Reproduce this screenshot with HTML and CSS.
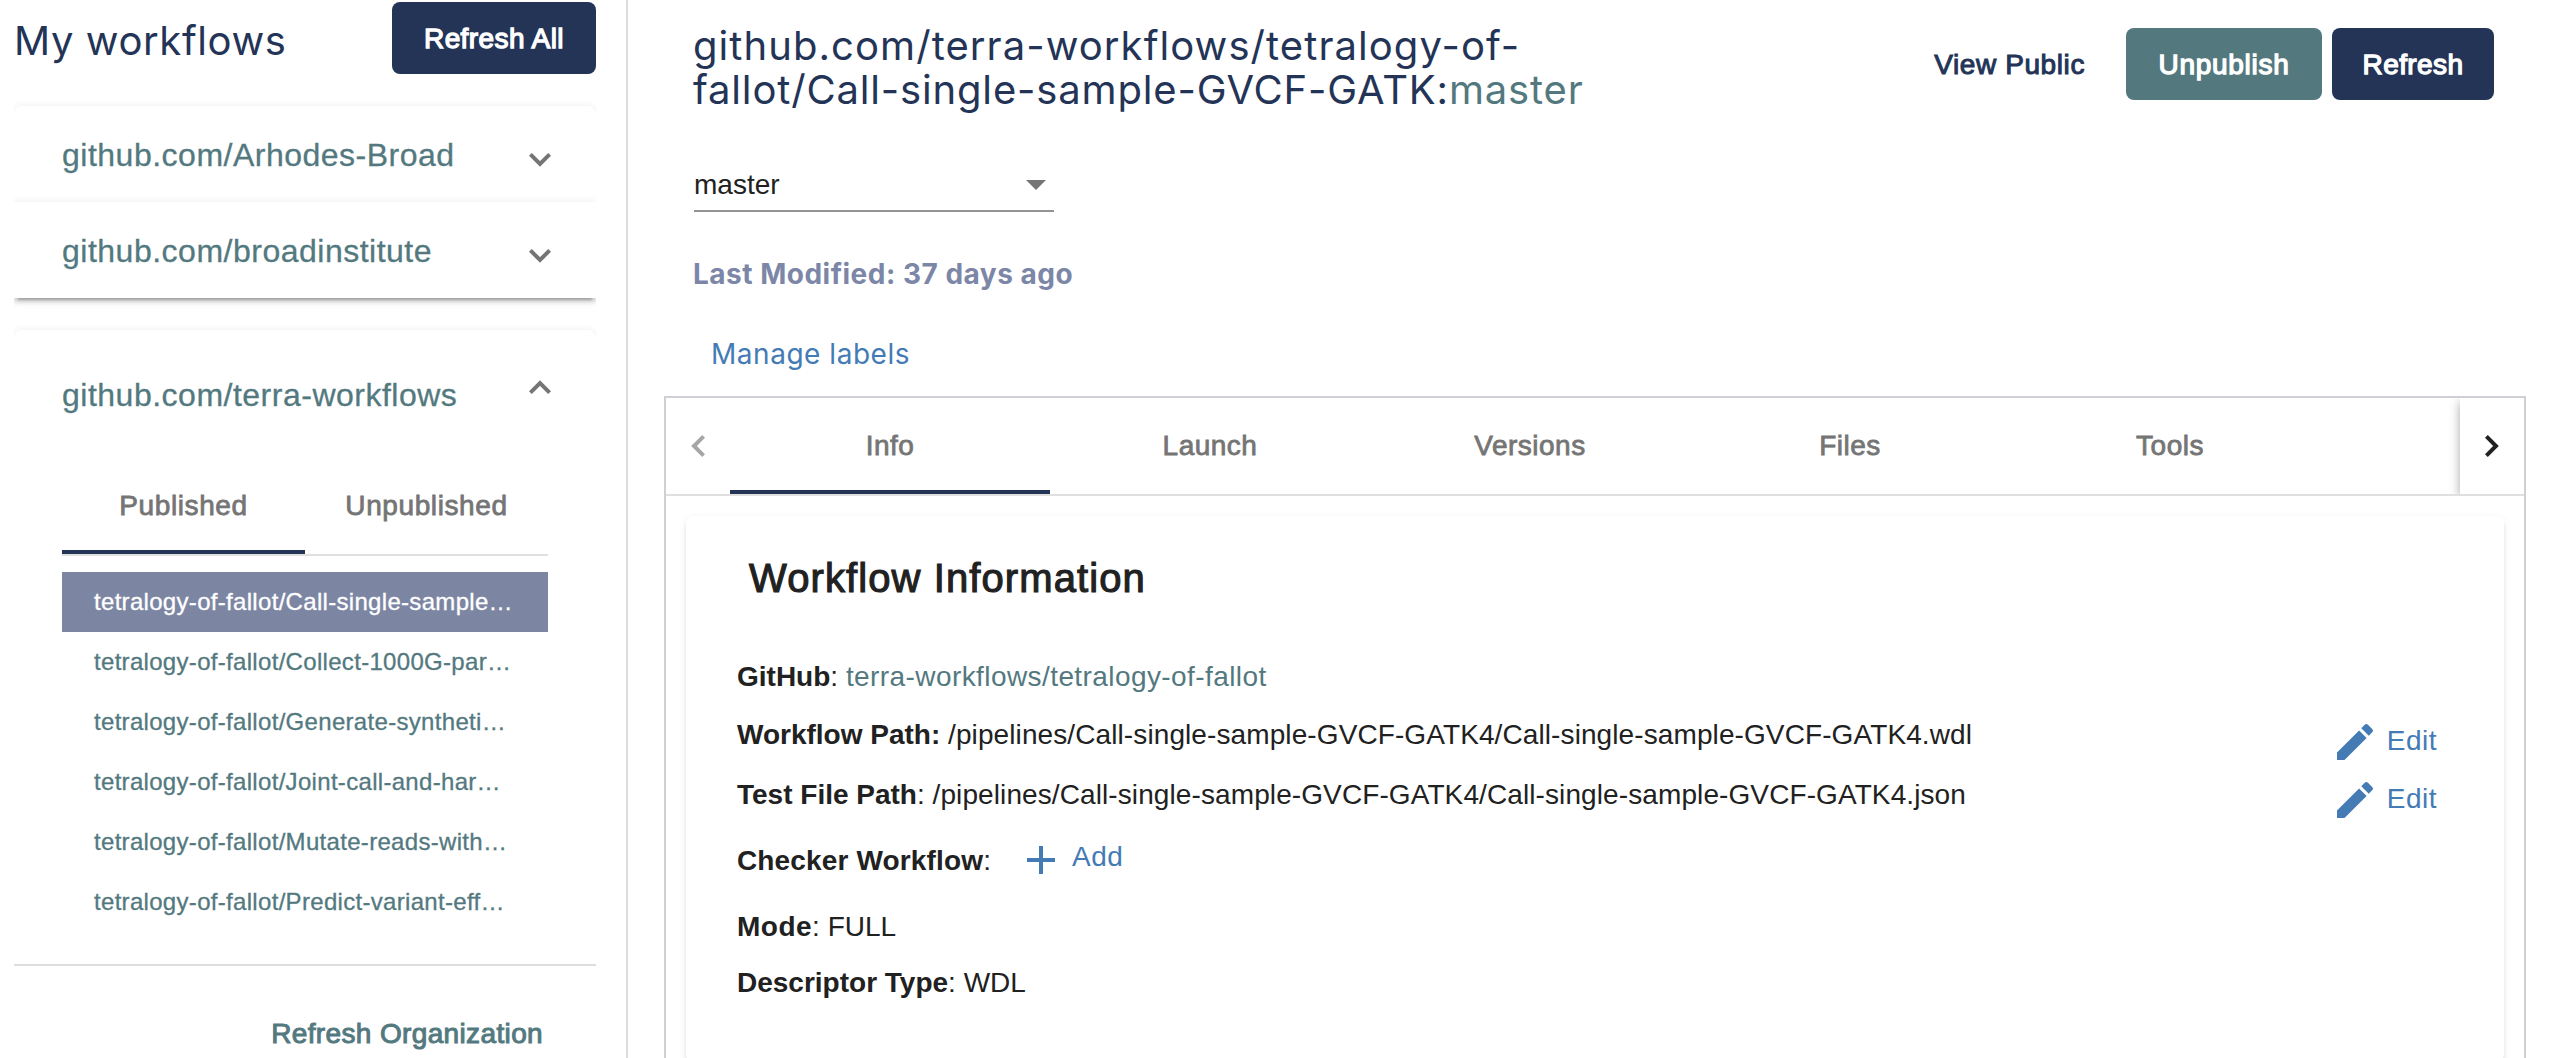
FILE: index.html
```html
<!DOCTYPE html>
<html lang="en">
<head>
<meta charset="utf-8">
<title>My workflows</title>
<link rel="stylesheet" href="styles.css">
</head>
<body>
<aside class="sidebar">
  <header class="sidebar-head">
    <h1 class="sidebar-title">My workflows</h1>
    <button class="btn btn-navy btn-all">Refresh All</button>
  </header>
  <div class="orgs">
    <section class="org org-first">
      <span class="org-name">github.com/Arhodes-Broad</span>
      <svg class="chev" viewBox="0 0 22 14"><path d="M1.4 1.4 11 11 20.6 1.4"/></svg>
    </section>
    <section class="org org-last">
      <span class="org-name">github.com/broadinstitute</span>
      <svg class="chev" viewBox="0 0 22 14"><path d="M1.4 1.4 11 11 20.6 1.4"/></svg>
    </section>
    <section class="org-open">
      <div class="org-open-head">
        <span class="org-name">github.com/terra-workflows</span>
        <svg class="chev chev-up" viewBox="0 0 22 14"><path d="M1.4 12.6 11 3 20.6 12.6"/></svg>
      </div>
      <nav class="mini-tabs">
        <a class="mini-tab active">Published</a>
        <a class="mini-tab">Unpublished</a>
      </nav>
      <ul class="entries">
        <li class="entry selected">tetralogy-of-fallot/Call-single-sample…</li>
        <li class="entry">tetralogy-of-fallot/Collect-1000G-par…</li>
        <li class="entry">tetralogy-of-fallot/Generate-syntheti…</li>
        <li class="entry">tetralogy-of-fallot/Joint-call-and-har…</li>
        <li class="entry">tetralogy-of-fallot/Mutate-reads-with…</li>
        <li class="entry">tetralogy-of-fallot/Predict-variant-eff…</li>
      </ul>
      <footer class="org-foot">Refresh Organization</footer>
    </section>
  </div>
</aside>
<main class="main">
  <header class="main-head">
    <h2 class="wf-title"><span class="line-one">github.com/terra-workflows/tetralogy-of-</span><br>fallot/Call-single-sample-GVCF-GATK:<em class="wf-version">master</em></h2>
    <div class="actions">
      <a class="view-public">View Public</a>
      <button class="btn btn-teal">Unpublish</button>
      <button class="btn btn-navy btn-refresh">Refresh</button>
    </div>
  </header>
  <div class="select"><span>master</span><svg class="caret" viewBox="0 0 20 10"><path d="M0 0h20L10 10z"/></svg></div>
  <p class="modified">Last Modified: 37 days ago</p>
  <a class="manage">Manage labels</a>
  <section class="panel">
    <nav class="tabs">
      <span class="pager"><svg class="arrow arrow-off" viewBox="0 0 14 22"><path d="M12.6 1.4 3 11l9.6 9.6"/></svg></span>
      <div class="tab-list">
        <a class="tab active">Info</a>
        <a class="tab">Launch</a>
        <a class="tab">Versions</a>
        <a class="tab">Files</a>
        <a class="tab">Tools</a>
      </div>
      <span class="pager pager-next"><svg class="arrow" viewBox="0 0 14 22"><path d="M1.4 1.4 11 11l-9.6 9.6"/></svg></span>
    </nav>
    <article class="card">
      <h3 class="card-title">Workflow Information</h3>
      <div class="row r-github"><b>GitHub</b>:&nbsp;<a class="repo">terra-workflows/tetralogy-of-fallot</a></div>
      <div class="row r-path"><b>Workflow Path:</b>&nbsp;<span class="path">/pipelines/Call-single-sample-GVCF-GATK4/Call-single-sample-GVCF-GATK4.wdl</span>
        <a class="edit"><svg class="icon" viewBox="0 0 24 24"><path d="M3 17.25V21h3.75L17.81 9.94l-3.75-3.75L3 17.25zM20.71 7.04a1 1 0 0 0 0-1.41l-2.34-2.34a1 1 0 0 0-1.41 0l-1.83 1.83 3.75 3.75 1.83-1.83z"/></svg><span>Edit</span></a></div>
      <div class="row r-test"><b>Test File Path</b>:&nbsp;<span class="path">/pipelines/Call-single-sample-GVCF-GATK4/Call-single-sample-GVCF-GATK4.json</span>
        <a class="edit edit-two"><svg class="icon" viewBox="0 0 24 24"><path d="M3 17.25V21h3.75L17.81 9.94l-3.75-3.75L3 17.25zM20.71 7.04a1 1 0 0 0 0-1.41l-2.34-2.34a1 1 0 0 0-1.41 0l-1.83 1.83 3.75 3.75 1.83-1.83z"/></svg><span>Edit</span></a></div>
      <div class="row r-checker"><b>Checker Workflow</b>:<a class="add"><svg class="icon" viewBox="0 0 24 24"><path d="M19 13h-6v6h-2v-6H5v-2h6V5h2v6h6v2z"/></svg><span>Add</span></a></div>
      <div class="row r-mode"><b>Mode</b>:&nbsp;<span>FULL</span></div>
      <div class="row r-type"><b>Descriptor Type</b>:&nbsp;<span>WDL</span></div>
    </article>
  </section>
</main>
</body>
</html>
```
FILE: styles.css
```css
* { box-sizing: border-box; }

body {
  margin: 0;
  width: 2550px;
  height: 1058px;
  overflow: hidden;
  display: flex;
  background: #fff;
  color: #212121;
  font: 28px/32px "Liberation Sans", Arial, sans-serif;
}

h1, h2, h3, p, ul { margin: 0; padding: 0; font-weight: 400; }
ul { list-style: none; }
span, b, a, h2 { white-space: nowrap; }
svg { display: block; flex: none; }

/* buttons */
.btn {
  height: 72px;
  border: 0;
  border-radius: 8px;
  padding: 1px 0 0;
  color: #fff;
  font: 28px/32px "Liberation Sans", Arial, sans-serif;
  letter-spacing: 0.42px;
  -webkit-text-stroke: 1.3px currentColor;
}
.btn-navy { background: #233457; }
.btn-teal { background: #53797f; width: 196px; letter-spacing: 0.7px; }
.btn-all { width: 204px; }
.btn-refresh { width: 162px; }

/* sidebar */
.sidebar {
  width: 628px;
  height: 1058px;
  flex: none;
  border-right: 2px solid #ddd;
  padding: 2px 30px 0 14px;
}
.sidebar-head {
  display: flex;
  justify-content: space-between;
  height: 92px;
}
.sidebar-title {
  font: 400 40px/48px Inter, sans-serif;
  letter-spacing: 0.6px;
  color: #233457;
  padding: 15px 0 0;
}
.orgs { overflow: hidden; padding-top: 12px; height: 964px; }
.org, .org-open {
  background: #fff;
  box-shadow: 0 6px 2px -4px rgba(0,0,0,.2), 0 4px 4px 0 rgba(0,0,0,.14), 0 2px 10px 0 rgba(0,0,0,.12);
}
.org {
  height: 96px;
  display: flex;
  justify-content: space-between;
  align-items: center;
  padding: 1px 45px 0 48px;
}
.org-first, .org-open { border-radius: 8px 8px 0 0; }
.org-name {
  font-size: 32px;
  line-height: 38px;
  letter-spacing: 0.5px;
  color: #53797f;
  -webkit-text-stroke: 0.3px currentColor;
}
.chev { width: 22px; height: 14px; fill: none; stroke: #757575; stroke-width: 4; margin-top: 11px; }
.org-open { margin-top: 32px; height: 800px; }
.org-open-head {
  height: 128px;
  display: flex;
  justify-content: space-between;
  align-items: center;
  padding: 1px 45px 0 48px;
}
.chev-up { margin: -15px 0 0; }

.mini-tabs {
  display: flex;
  height: 98px;
  margin: 0 48px;
  border-bottom: 2px solid #e0e0e0;
}
.mini-tab {
  flex: 1;
  display: flex;
  justify-content: center;
  align-items: center;
  color: #757575;
  letter-spacing: 0.6px;
  -webkit-text-stroke: 0.8px currentColor;
}
.active { box-shadow: inset 0 -4px #233457; }

.entries { margin: 16px 48px 0; }
.entry {
  height: 60px;
  padding-left: 32px;
  font-size: 24px;
  line-height: 60px;
  letter-spacing: 0.31px;
  white-space: nowrap;
  color: #53797f;
  -webkit-text-stroke: 0.3px currentColor;
}
.entry.selected { background: #7c86a3; color: #fff; }
.org-foot {
  margin-top: 32px;
  border-top: 2px solid #ddd;
  padding: 52px 53px 0 0;
  text-align: right;
  color: #53797f;
  letter-spacing: 0.36px;
  -webkit-text-stroke: 1px currentColor;
}

/* main column */
.main { flex: 1; padding: 0 24px 0 36px; }
.main-head {
  height: 164px;
  padding: 24px 32px 0 29px;
  display: flex;
  justify-content: space-between;
}
.wf-title {
  font: 400 40px/44px Inter, sans-serif;
  letter-spacing: 0.84px;
  color: #233457;
}
.line-one { letter-spacing: 1.07px; }
.wf-version { font-style: normal; color: #53797f; }
.actions { display: flex; gap: 10px; padding-top: 4px; }
.view-public {
  line-height: 73px;
  color: #233457;
  padding-right: 31px;
  letter-spacing: 0.6px;
  -webkit-text-stroke: 1px currentColor;
}
.select {
  width: 360px;
  height: 48px;
  margin-left: 30px;
  padding: 5px 8px 0 0;
  border-bottom: 2px solid #949494;
  display: flex;
  justify-content: space-between;
}
.caret { width: 20px; height: 10px; margin-top: 11px; fill: #757575; }
.modified {
  margin: 46px 0 0 29px;
  font: 700 28px/32px Inter, sans-serif;
  letter-spacing: 0.5px;
  color: #7c86a7;
}
.manage {
  display: block;
  margin: 48px 0 0 47px;
  font: 400 28px/32px Inter, sans-serif;
  letter-spacing: 0.53px;
  color: #447bb5;
}

/* tabbed panel */
.panel {
  margin-top: 26px;
  height: 680px;
  border: 2px solid #cfcfd6;
  border-bottom: 0;
}
.tabs { display: flex; height: 98px; border-bottom: 2px solid #e0e0e0; }
.pager {
  width: 64px;
  flex: none;
  display: flex;
  align-items: center;
  justify-content: center;
}
.pager-next { box-shadow: 0 4px 10px rgba(0,0,0,.35); clip-path: inset(0 0 0 -20px); }
.arrow { width: 14px; height: 22px; fill: none; stroke: #212121; stroke-width: 4; }
.arrow-off { stroke: #a6a6a6; }
.tab-list { flex: 1; display: flex; }
.tab {
  width: 320px;
  line-height: 96px;
  text-align: center;
  color: #757575;
  letter-spacing: 0.5px;
  -webkit-text-stroke: 0.8px currentColor;
}
.card {
  margin: 20px 20px 0;
  height: 546px;
  border-radius: 8px;
  padding: 38px 51px 0;
  box-shadow: 0 6px 2px -4px rgba(0,0,0,.2), 0 4px 4px 0 rgba(0,0,0,.07), 0 2px 8px 0 rgba(0,0,0,.07);
}
.card-title {
  font-size: 40px;
  line-height: 48px;
  padding-left: 12px;
  letter-spacing: 1.1px;
  -webkit-text-stroke: 1.1px currentColor;
}
.row { display: flex; height: 32px; }
.r-github { margin-top: 59px; }
.r-path { margin-top: 26px; }
.r-test { margin-top: 28px; }
.r-checker { margin-top: 34px; }
.r-mode { margin-top: 34px; }
.r-type { margin-top: 24px; }
.r-checker b { letter-spacing: 0.15px; }
.r-mode b { letter-spacing: 0.5px; }
.repo { color: #53797f; letter-spacing: 0.42px; }
.path { letter-spacing: 0.1px; }
.edit, .add {
  display: flex;
  height: 48px;
  color: #447bb5;
  fill: #447bb5;
  letter-spacing: 0.5px;
}
.edit { margin: -1px 16px 0 auto; gap: 8px; }
.edit span { padding-top: 7px; }
.edit-two { margin-top: -3px; }
.add { margin: -9px 0 0 26px; gap: 7px; }
.add span { padding-top: 5px; }
.icon { width: 48px; height: 48px; }
```
